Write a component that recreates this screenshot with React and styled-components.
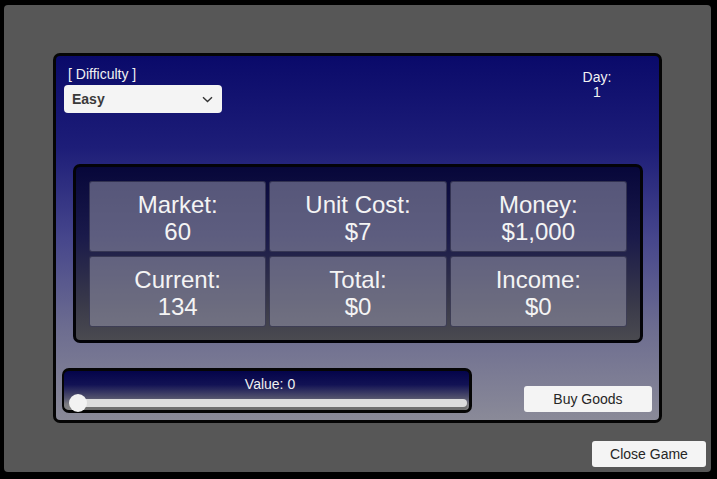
import React from "react";
import styled, { createGlobalStyle } from "styled-components";

const Global = createGlobalStyle`
  html, body { margin: 0; padding: 0; background: #000; }
  body { width: 717px; height: 479px; overflow: hidden; font-family: "Liberation Sans", Arial, sans-serif; }
  * { box-sizing: border-box; }
`;

const Frame = styled.div`
  margin: 5px 6px 0 4px;
  width: 707px;
  height: 467px;
  background: #575757;
  border-radius: 4px;
  padding: 48px 49px 5px 49px;
  display: flex;
  flex-direction: column;
`;

const Panel = styled.div`
  width: 609px;
  height: 370px;
  border: 3px solid #050505;
  border-radius: 7px;
  background: linear-gradient(180deg, #0a0a6a 0%, #1d1d78 25%, #46468c 50%, #6d6d90 75%, #8a8a98 100%);
  display: flex;
  flex-direction: column;
`;

const TopRow = styled.div`
  display: flex;
  justify-content: space-between;
  align-items: flex-start;
  padding: 10px 0 0 8px;
`;

const Group = styled.div`
  display: flex;
  flex-direction: column;
`;

const Label = styled.div`
  color: #f2f2f2;
  font-size: 14px;
  line-height: 16px;
  padding-left: 4px;
`;

const Select = styled.div`
  margin-top: 3px;
  width: 158px;
  height: 28px;
  background: #f4f4f4;
  border-radius: 4px;
  display: flex;
  align-items: center;
  justify-content: space-between;
  padding: 0 9px 0 8px;
  color: #3a3a3a;
  font-size: 14px;
  font-weight: bold;
`;

const DayBlock = styled.div`
  width: 60px;
  margin: 4px 32px 0 0;
  color: #f2f2f2;
  font-size: 14px;
  line-height: 15px;
  text-align: center;
`;

const Stats = styled.div`
  margin: 51px 0 0 17px;
  width: 570px;
  height: 179px;
  border: 3px solid #030308;
  border-radius: 7px;
  background: linear-gradient(180deg, #07073a 0%, #1a1a4a 40%, #3a3a4a 80%, #4a4a50 100%);
  padding: 14px 13px 13px 13px;
  display: grid;
  grid-template-columns: repeat(3, 1fr);
  grid-template-rows: repeat(2, 1fr);
  column-gap: 3px;
  row-gap: 4px;
`;

const Cell = styled.div`
  border-radius: 3px;
  border: 1px solid rgba(20, 20, 50, 0.55);
  background: rgba(150, 150, 172, 0.55);
  color: #f4f4f4;
  font-size: 24px;
  line-height: 27px;
  text-align: center;
  display: flex;
  flex-direction: column;
  justify-content: center;
  padding-top: 3px;
`;

const BottomRow = styled.div`
  display: flex;
  align-items: flex-end;
  margin: 25px 0 0 6px;
`;

const SliderBox = styled.div`
  width: 410px;
  height: 45px;
  border: 3px solid #050505;
  border-left-width: 2px;
  border-radius: 7px;
  background: linear-gradient(180deg, #04044a 0%, #121254 35%, #50506c 68%, #7a7a80 85%, #858585 100%);
  padding: 5px 2px 0 6px;
  display: flex;
  flex-direction: column;
`;

const ValueText = styled.div`
  color: #f0f0f0;
  font-size: 14px;
  line-height: 16px;
  text-align: center;
  padding-left: 3px;
`;

const Track = styled.div`
  position: relative;
  margin-top: 7px;
  height: 8px;
  border-radius: 4px;
  background: #dcdcdc;
  box-shadow: 0 3px 0 #6e6e6e;
`;

const Thumb = styled.div`
  position: absolute;
  left: -1px;
  top: -5px;
  width: 18px;
  height: 18px;
  border-radius: 50%;
  background: #f2f2f2;
`;

const Button = styled.div`
  width: ${(p) => p.$w}px;
  height: 26px;
  background: #f4f4f4;
  border-radius: 3px;
  color: #262626;
  font-size: 14px;
  display: flex;
  align-items: center;
  justify-content: center;
`;

const BuyWrap = styled.div`
  margin: 0 0 1px 52px;
`;

const CloseRow = styled.div`
  display: flex;
  justify-content: flex-end;
  margin: 18px -44px 0 0;
`;

const stats = [
  ["Market:", "60"],
  ["Unit Cost:", "$7"],
  ["Money:", "$1,000"],
  ["Current:", "134"],
  ["Total:", "$0"],
  ["Income:", "$0"],
];

export default function App() {
  return (
    <>
      <Global />
      <Frame>
        <Panel>
          <TopRow>
            <Group>
              <Label>[ Difficulty ]</Label>
              <Select>
                <span>Easy</span>
                <svg width="11" height="7" viewBox="0 0 11 7">
                  <path d="M1 1.2 L5.5 5.5 L10 1.2" fill="none" stroke="#333" strokeWidth="1.4" />
                </svg>
              </Select>
            </Group>
            <DayBlock>
              <div>Day:</div>
              <div>1</div>
            </DayBlock>
          </TopRow>
          <Stats>
            {stats.map(([k, v]) => (
              <Cell key={k}>
                <div>{k}</div>
                <div>{v}</div>
              </Cell>
            ))}
          </Stats>
          <BottomRow>
            <SliderBox>
              <ValueText>Value: 0</ValueText>
              <Track>
                <Thumb />
              </Track>
            </SliderBox>
            <BuyWrap>
              <Button $w={128}>Buy Goods</Button>
            </BuyWrap>
          </BottomRow>
        </Panel>
        <CloseRow>
          <Button $w={114}>Close Game</Button>
        </CloseRow>
      </Frame>
    </>
  );
}
